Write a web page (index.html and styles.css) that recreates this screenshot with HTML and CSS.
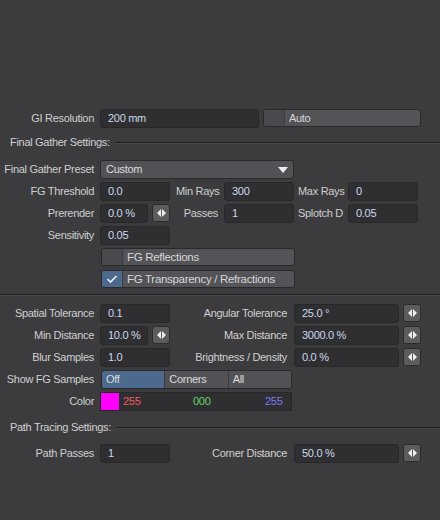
FILE: index.html
```html
<!DOCTYPE html>
<html lang="en">
<head>
    <meta charset="UTF-8">
    <title>Final Gather Settings</title>
    <link rel="stylesheet" href="styles.css">
</head>
<body>
    <div class="panel">
        <div class="row">
            <span class="label">GI Resolution</span>
            <span class="field w160">200 mm</span>
            <span class="toggle w158"><span class="box"></span><span class="toggle-text">Auto</span></span>
        </div>

        <div class="header"><span>Final Gather Settings:</span><span class="rule"></span></div>

        <div class="row">
            <span class="label">Final Gather Preset</span>
            <span class="dropdown">Custom<span class="arrow"></span></span>
        </div>
        <div class="row">
            <span class="label">FG Threshold</span>
            <span class="field w70">0.0</span>
            <span class="mid-label">Min Rays</span>
            <span class="field w70">300</span>
            <span class="end-label">Max Rays</span>
            <span class="field w70">0</span>
        </div>
        <div class="row">
            <span class="label">Prerender</span>
            <span class="field w48">0.0 %</span>
            <span class="spin"><span class="tri-l"></span><span class="tri-r"></span></span>
            <span class="mid-label">Passes</span>
            <span class="field w70">1</span>
            <span class="end-label">Splotch D</span>
            <span class="field w70">0.05</span>
        </div>
        <div class="row">
            <span class="label">Sensitivity</span>
            <span class="field w70">0.05</span>
        </div>
        <div class="row check-row">
            <span class="toggle w194"><span class="box"></span><span class="toggle-text">FG Reflections</span></span>
        </div>
        <div class="row check-row">
            <span class="toggle w194"><span class="box on">
                <svg width="12" height="10" viewBox="0 0 12 10"><path d="M1.5 5 L4.5 8 L10.5 2" fill="none" stroke="#e8eef5" stroke-width="1.6"/></svg>
            </span><span class="toggle-text">FG Transparency / Refractions</span></span>
        </div>

        <div class="divider"></div>

        <div class="row">
            <span class="label">Spatial Tolerance</span>
            <span class="field w70">0.1</span>
            <span class="wide-label">Angular Tolerance</span>
            <span class="field w106">25.0 °</span>
            <span class="spin"><span class="tri-l"></span><span class="tri-r"></span></span>
        </div>
        <div class="row">
            <span class="label">Min Distance</span>
            <span class="field w48">10.0 %</span>
            <span class="spin"><span class="tri-l"></span><span class="tri-r"></span></span>
            <span class="wide-label">Max Distance</span>
            <span class="field w106">3000.0 %</span>
            <span class="spin"><span class="tri-l"></span><span class="tri-r"></span></span>
        </div>
        <div class="row">
            <span class="label">Blur Samples</span>
            <span class="field w70">1.0</span>
            <span class="wide-label">Brightness / Density</span>
            <span class="field w106">0.0 %</span>
            <span class="spin"><span class="tri-l"></span><span class="tri-r"></span></span>
        </div>
        <div class="row">
            <span class="label">Show FG Samples</span>
            <span class="segments">
                <span class="seg active">Off</span>
                <span class="seg">Corners</span>
                <span class="seg">All</span>
            </span>
        </div>
        <div class="row">
            <span class="label">Color</span>
            <span class="color-field">
                <span class="swatch"></span>
                <span class="c-red">255</span>
                <span class="c-green">000</span>
                <span class="c-blue">255</span>
            </span>
        </div>

        <div class="header path"><span>Path Tracing Settings:</span><span class="rule"></span></div>

        <div class="row">
            <span class="label">Path Passes</span>
            <span class="field w70">1</span>
            <span class="wide-label">Corner Distance</span>
            <span class="field w106">50.0 %</span>
            <span class="spin"><span class="tri-l"></span><span class="tri-r"></span></span>
        </div>
    </div>
</body>
</html>
```

FILE: styles.css
```css
body {
    margin: 0;
    background-color: #3c3c3f;
    color: #cfcfcf;
    font-family: "Liberation Sans", Arial, sans-serif;
    font-size: 11px;
    letter-spacing: -0.3px;
}
.panel {
    padding-top: 109px;
    height: 411px;
}
.row {
    display: flex;
    align-items: center;
    height: 18px;
    margin-bottom: 4px;
}
.label {
    width: 94px;
    padding-right: 6px;
    text-align: right;
    white-space: nowrap;
    flex: none;
}
.mid-label {
    width: 48px;
    padding-left: 6px;
    text-align: left;
    flex: none;
}
.row .mid-label:nth-child(4) {
    width: 48px;
    padding-left: 0;
    padding-right: 6px;
    text-align: right;
}
.end-label {
    width: 50px;
    padding-left: 4px;
    flex: none;
}
.wide-label {
    width: 117px;
    padding-right: 7px;
    text-align: right;
    white-space: nowrap;
    flex: none;
}
.field {
    box-sizing: border-box;
    height: 19px;
    line-height: 17px;
    padding-left: 7px;
    background-color: #2f2f32;
    border: 1px solid #28282a;
    border-radius: 3px;
    color: #ccd8ea;
    white-space: nowrap;
    flex: none;
}
.w48 { width: 48px; }
.w70 { width: 70px; }
.w106 { width: 105px; }
.w160 { width: 159px; }
.w158 { width: 158px; margin-left: 4px; }
.w194 { width: 194px; margin-left: 101px; }
.spin {
    box-sizing: border-box;
    width: 18px;
    height: 18px;
    margin-left: 4px;
    background-color: #5c5c60;
    border: 1px solid #2c2c2e;
    border-radius: 3px;
    display: flex;
    align-items: center;
    justify-content: center;
    gap: 1px;
    flex: none;
}
.tri-l, .tri-r {
    width: 0;
    height: 0;
    border-top: 4px solid transparent;
    border-bottom: 4px solid transparent;
}
.tri-l { border-right: 4px solid #eeeeee; }
.tri-r { border-left: 4px solid #eeeeee; }
.toggle {
    box-sizing: border-box;
    height: 18px;
    display: flex;
    background-color: #545458;
    border: 1px solid #2a2a2c;
    border-radius: 3px;
    overflow: hidden;
    flex: none;
}
.box {
    width: 20px;
    height: 100%;
    background-color: #4a4a4e;
    border-right: 1px solid #3c3c3f;
    display: flex;
    align-items: center;
    justify-content: center;
}
.box.on {
    background-color: #4b6a8d;
}
.toggle-text {
    padding-left: 4px;
    line-height: 16px;
    color: #d6d6d6;
}
.check-row {
    margin-top: 1px;
}
.check-row .toggle-text {
    font-size: 11.5px;
}
.dropdown {
    position: relative;
    box-sizing: border-box;
    width: 194px;
    height: 19px;
    line-height: 17px;
    padding-left: 5px;
    background-color: #525256;
    border: 1px solid #2a2a2c;
    border-radius: 3px;
    color: #dcdcdc;
    flex: none;
}
.arrow {
    position: absolute;
    right: 5px;
    top: 6px;
    width: 0;
    height: 0;
    border-left: 5px solid transparent;
    border-right: 5px solid transparent;
    border-top: 6px solid #eeeeee;
}
.header {
    display: flex;
    align-items: center;
    height: 20px;
    margin: 5px 0 8px 0;
    padding-left: 10px;
}
.header.path {
    margin: 7px 0 7px 0;
}
.rule {
    flex: 1;
    height: 1px;
    margin-left: 5px;
    margin-top: 1px;
    background-color: #1e1e20;
    border-bottom: 1px solid #4a4a4e;
}
.divider {
    height: 1px;
    margin: 6px 0 8px 0;
    background-color: #1e1e20;
    border-bottom: 1px solid #4a4a4e;
}
.segments {
    box-sizing: border-box;
    width: 191px;
    height: 19px;
    margin-left: 1px;
    display: flex;
    border: 1px solid #2a2a2c;
    border-radius: 3px;
    overflow: hidden;
    flex: none;
}
.seg {
    flex: 1;
    line-height: 17px;
    padding-left: 4px;
    background-color: #525256;
    border-left: 1px solid #3a3a3d;
    color: #dcdcdc;
}
.seg:first-child {
    border-left: none;
}
.seg.active {
    background-color: #4b6a8d;
}
.color-field {
    box-sizing: border-box;
    width: 192px;
    height: 19px;
    display: flex;
    align-items: center;
    background-color: #2f2f32;
    border: 1px solid #28282a;
    flex: none;
}
.swatch {
    width: 18px;
    height: 17px;
    background-color: #ff00ff;
}
.c-red {
    color: #f05a5a;
    padding-left: 4px;
    width: 70px;
}
.c-green {
    color: #66d266;
    width: 72px;
}
.c-blue {
    color: #7a7cf0;
    width: 17px;
}
```
